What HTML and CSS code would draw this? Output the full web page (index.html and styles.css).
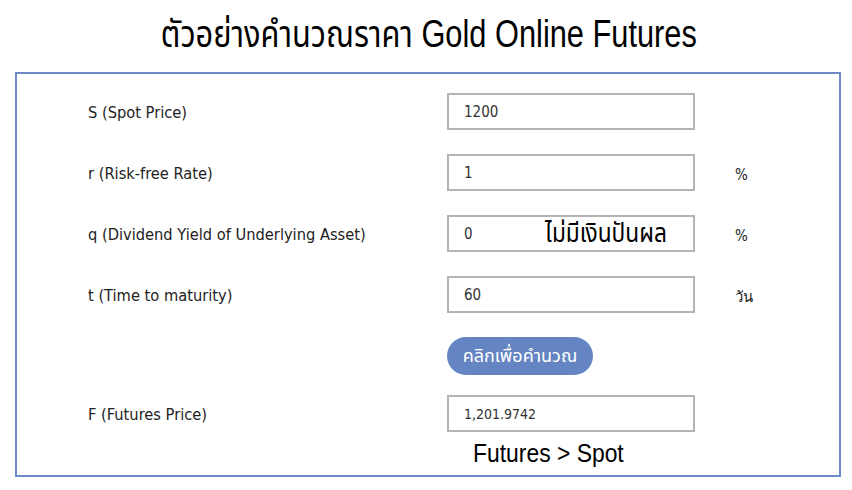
FILE: index.html
```html
<!DOCTYPE html>
<html lang="th">
<head>
<meta charset="utf-8">
<title>ตัวอย่างคำนวณราคา Gold Online Futures</title>
<link rel="stylesheet" href="styles.css">
</head>
<body>
<h1 class="title"><span class="title-text">ตัวอย่างคำนวณราคา Gold Online Futures</span></h1>
<div class="panel">
  <div class="row">
    <div class="label">S (Spot Price)</div>
    <div class="field">1200</div>
    <div class="unit"></div>
  </div>
  <div class="row">
    <div class="label">r (Risk-free Rate)</div>
    <div class="field">1</div>
    <div class="unit">%</div>
  </div>
  <div class="row">
    <div class="label">q (Dividend Yield of Underlying Asset)</div>
    <div class="field">0<span class="note">ไม่มีเงินปันผล</span></div>
    <div class="unit">%</div>
  </div>
  <div class="row">
    <div class="label">t (Time to maturity)</div>
    <div class="field">60</div>
    <div class="unit">วัน</div>
  </div>
  <div class="row row-btn">
    <div class="label"></div>
    <div><button class="calc">คลิกเพื่อคำนวณ</button></div>
    <div class="unit"></div>
  </div>
  <div class="row">
    <div class="label">F (Futures Price)</div>
    <div class="field field-result">1,201.9742</div>
    <div class="unit"></div>
  </div>
  <div class="compare"><span class="compare-text">Futures &gt; Spot</span></div>
</div>
</body>
</html>
```

FILE: styles.css
```css
html, body {
  margin: 0;
  padding: 0;
  background: #ffffff;
}
body {
  width: 852px;
  height: 490px;
  overflow: hidden;
  font-family: "DejaVu Sans", "Noto Sans", sans-serif;
  color: #1a1a1a;
}
.title {
  margin: 0;
  height: 70px;
  display: flex;
  align-items: center;
  justify-content: center;
  font-family: "Liberation Sans", "Noto Sans Thai", sans-serif;
  font-weight: normal;
  font-size: 38px;
  color: #000;
  padding-left: 6px;
}
.title-text {
  display: inline-block;
  transform: scaleX(0.81);
  white-space: nowrap;
}
.panel {
  margin-left: 15px;
  width: 822px;
  border: 2px solid #6c8ac6;
  padding-top: 19px;
  height: 382px;
  display: flex;
  flex-direction: column;
  margin-top: 2px;
}
.row {
  display: grid;
  grid-template-columns: 359px 286px auto;
  align-items: center;
  padding-left: 71px;
  height: 37px;
  margin-bottom: 24px;
}
.row-btn {
  height: 38px;
  margin-bottom: 20px;
}
.label {
  font-family: "DejaVu Sans", sans-serif;
  font-stretch: condensed;
  font-size: 16.3px;
  color: #222;
  padding-top: 1px;
}
.field {
  position: relative;
  box-sizing: border-box;
  width: 248px;
  height: 37px;
  border: 2px solid #b4b4b4;
  padding-left: 15px;
  display: flex;
  align-items: center;
  font-family: "DejaVu Sans", sans-serif;
  font-stretch: condensed;
  font-size: 15px;
  color: #333;
}
.field-result {
  font-size: 14px;
}
.note {
  position: absolute;
  left: 96px;
  top: 0;
  bottom: 0;
  display: flex;
  align-items: center;
  font-size: 27px;
  color: #000;
  font-family: "Noto Sans Thai", sans-serif;
  transform: scaleX(0.84);
  transform-origin: left center;
  white-space: nowrap;
}
.unit {
  font-family: "DejaVu Sans", sans-serif;
  font-stretch: condensed;
  font-size: 15px;
  color: #222;
  padding-top: 4px;
  padding-left: 2px;
}
.calc {
  width: 146px;
  height: 38px;
  border: none;
  border-radius: 19px;
  background: #6485c2;
  color: #fff;
  font-size: 18px;
  font-family: "Noto Sans Thai", sans-serif;
  padding: 0;
}
.compare {
  margin-top: -18px;
  padding-left: 456px;
  font-family: "Liberation Sans", sans-serif;
  font-size: 26px;
  color: #000;
}
.compare-text {
  display: inline-block;
  transform: scaleX(0.88);
  transform-origin: left center;
  white-space: nowrap;
}
```
